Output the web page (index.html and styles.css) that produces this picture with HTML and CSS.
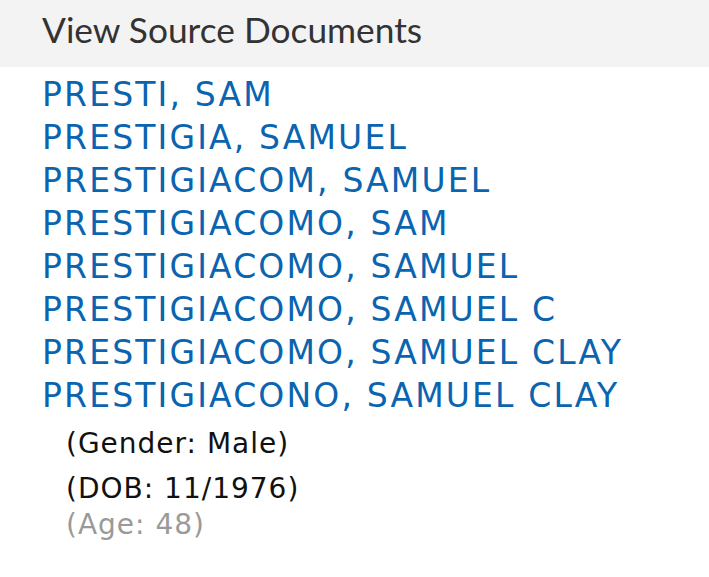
FILE: index.html
```html
<!DOCTYPE html>
<html>
<head>
<meta charset="utf-8">
<link rel="stylesheet" href="styles.css">
</head>
<body>
<div class="header">View Source Documents</div>
<ul class="names">
  <li><a href="#">PRESTI, SAM</a></li>
  <li><a href="#">PRESTIGIA, SAMUEL</a></li>
  <li><a href="#">PRESTIGIACOM, SAMUEL</a></li>
  <li><a href="#">PRESTIGIACOMO, SAM</a></li>
  <li><a href="#">PRESTIGIACOMO, SAMUEL</a></li>
  <li><a href="#">PRESTIGIACOMO, SAMUEL C</a></li>
  <li><a href="#">PRESTIGIACOMO, SAMUEL CLAY</a></li>
  <li><a href="#">PRESTIGIACONO, SAMUEL CLAY</a></li>
</ul>
<div class="details">
  <div class="detail gender">(Gender: Male)</div>
  <div class="detail dob">(DOB: 11/1976)</div>
  <div class="detail age">(Age: 48)</div>
</div>
</body>
</html>
```
FILE: styles.css
```css
html, body {
  margin: 0;
  padding: 0;
  background: #ffffff;
}
.header {
  box-sizing: border-box;
  height: 67px;
  padding: 8px 0 0 42px;
  background: #f3f3f3;
  font-family: Lato, "Liberation Sans", sans-serif;
  font-size: 35.3px;
  line-height: 43px;
  color: #333333;
}
.names {
  list-style: none;
  margin: 6px 0 0 0;
  padding: 0 0 0 42px;
  font-family: "DejaVu Sans", sans-serif;
  font-size: 33px;
  line-height: 43px;
  letter-spacing: 2.15px;
}
.names a {
  color: #0a64b0;
  text-decoration: none;
}
.details {
  padding-left: 66px;
  margin-top: 9px;
  font-family: "DejaVu Sans", sans-serif;
  font-size: 28px;
  line-height: 36px;
  letter-spacing: 1px;
  color: #111111;
}
.gender {
  margin-bottom: 9px;
}
.age {
  color: #9a9a9a;
}
```
